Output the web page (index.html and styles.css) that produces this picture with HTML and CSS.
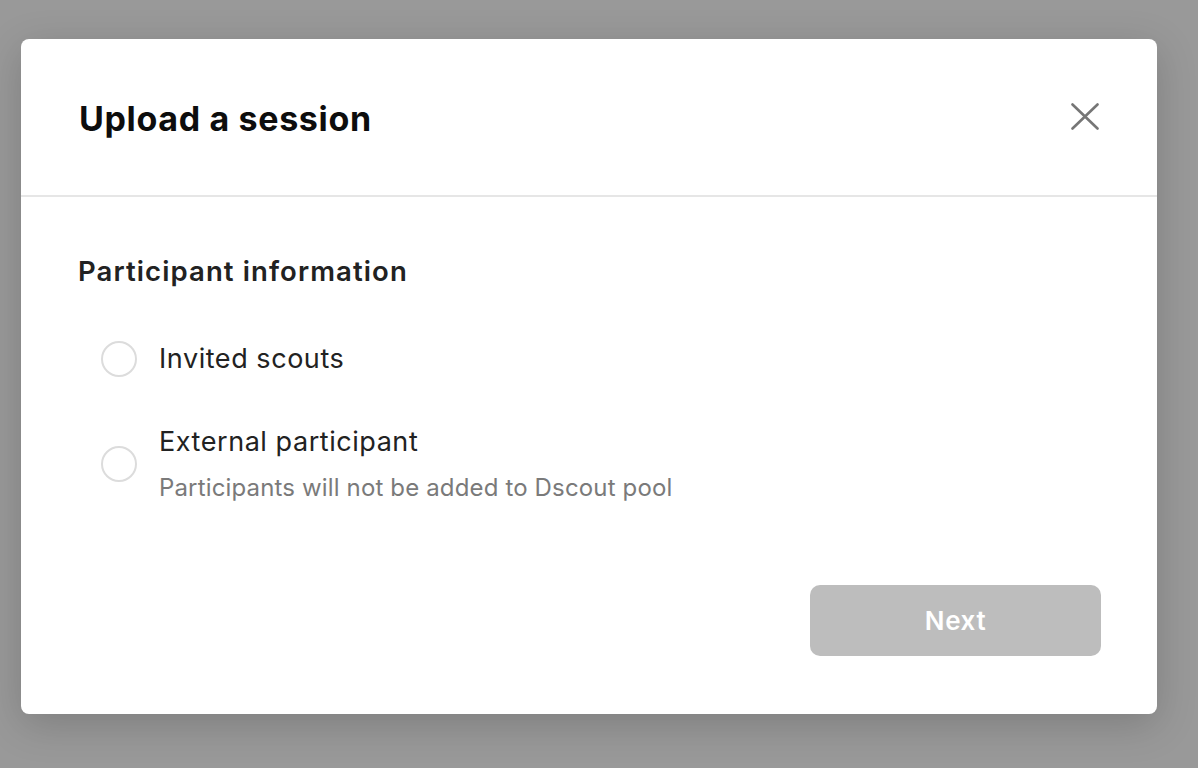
FILE: index.html
```html
<!DOCTYPE html>
<html>
<head>
<meta charset="utf-8">
<link rel="stylesheet" href="styles.css">
</head>
<body>
<div class="modal">
  <div class="modal-header">
    <h1 class="title">Upload a session</h1>
    <button class="close" aria-label="Close">
      <svg width="28" height="27" viewBox="0 0 28 27"><path d="M1.5 1.5 L26.5 25.5 M26.5 1.5 L1.5 25.5" stroke="#767676" stroke-width="2.6" stroke-linecap="round" fill="none"/></svg>
    </button>
  </div>
  <div class="modal-body">
    <h2 class="section">Participant information</h2>
    <div class="options">
      <label class="option">
        <span class="radio"></span>
        <span class="opt-text"><span class="opt-label">Invited scouts</span></span>
      </label>
      <label class="option">
        <span class="radio"></span>
        <span class="opt-text">
          <span class="opt-label">External participant</span>
          <span class="opt-sub">Participants will not be added to Dscout pool</span>
        </span>
      </label>
    </div>
    <div class="footer">
      <button class="next">Next</button>
    </div>
  </div>
</div>
</body>
</html>
```

FILE: styles.css
```css
* { box-sizing: border-box; }
html, body { margin: 0; padding: 0; }
body {
  background: #999999;
  width: 1198px;
  height: 768px;
  font-family: Inter, "Noto Sans", sans-serif;
  padding: 39px 41px 0 21px;
  overflow: hidden;
}
.modal {
  width: 1136px;
  height: 675px;
  background: #fff;
  border-radius: 8px;
  box-shadow: 0 10px 40px rgba(0,0,0,0.18);
  display: flex;
  flex-direction: column;
}
.modal-header {
  height: 158px;
  border-bottom: 2px solid #e6e6e6;
  display: flex;
  align-items: center;
  justify-content: space-between;
  padding: 2px 58px 0 58px;
}
.title {
  margin: 0;
  font-size: 34px;
  font-weight: 700;
  color: #0d0d0d;
  letter-spacing: 0.65px;
}
.close {
  background: none;
  border: 0;
  padding: 0;
  width: 28px;
  height: 27px;
  margin-bottom: 3px;
  display: flex;
}
.modal-body {
  flex: 1;
  padding: 56px 56px 0 57px;
  display: flex;
  flex-direction: column;
}
.section {
  margin: 0;
  font-size: 27.5px;
  font-weight: 600;
  color: #222;
  line-height: 36px;
  letter-spacing: 1.1px;
}
.options {
  margin-top: 52px;
  padding-left: 23px;
  display: flex;
  flex-direction: column;
  gap: 48px;
}
.option {
  display: flex;
  align-items: center;
  gap: 22px;
}
.radio {
  width: 36px;
  height: 36px;
  border: 2px solid #dcdcdc;
  border-radius: 50%;
  flex: none;
}
.opt-text {
  display: flex;
  flex-direction: column;
  gap: 14px;
}
.opt-label {
  font-size: 27px;
  color: #222;
  line-height: 34px;
  letter-spacing: 0.55px;
}
.opt-sub {
  font-size: 24px;
  color: #7a7a7a;
  line-height: 30px;
  letter-spacing: 0.15px;
}
.footer {
  margin-top: 82px;
  display: flex;
  justify-content: flex-end;
}
.next {
  width: 291px;
  height: 71px;
  background: #bdbdbd;
  border: 0;
  border-radius: 10px;
  color: #fff;
  font-family: Inter, "Noto Sans", sans-serif;
  font-size: 26px;
  font-weight: 600;
  letter-spacing: 0.6px;
}
```
